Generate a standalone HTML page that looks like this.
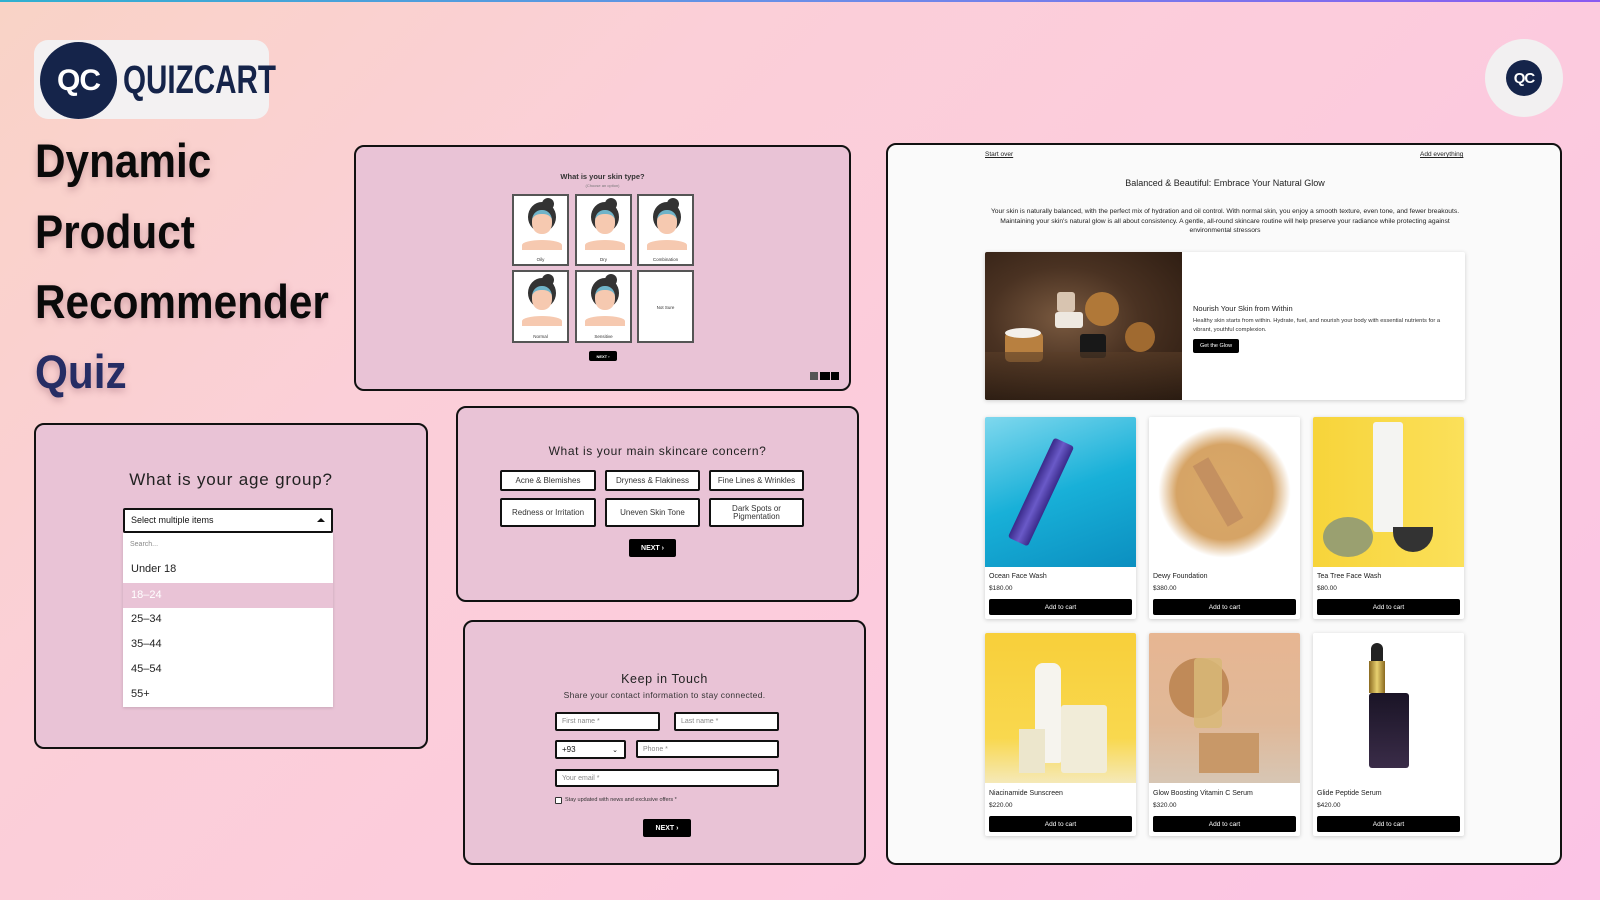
<!DOCTYPE html>
<html><head><meta charset="utf-8"><style>
*{box-sizing:border-box;margin:0;padding:0}
body{width:1600px;height:900px;overflow:hidden;position:relative;font-family:"Liberation Sans",sans-serif;
background:linear-gradient(135deg,#f9d3c6 0%,#fbcfd8 30%,#fccbdd 60%,#fcc4e6 100%);}
.topline{position:absolute;left:0;top:0;width:1600px;height:2px;background:linear-gradient(90deg,#30b0d0,#6a8ee8,#8a5af0)}
.abs{position:absolute}
.panel{position:absolute;background:#e9c3d6;border:2px solid #111;border-radius:10px}
.h{position:absolute;left:35px;font-weight:bold;font-size:47px;color:#0a0a0a;text-shadow:0 3px 8px rgba(120,60,80,.35);transform:scaleX(.9);transform-origin:left;white-space:nowrap}
.box{position:absolute;background:#fff;border:2px solid #111;border-radius:2px;font-size:8px;color:#333;display:flex;align-items:center;justify-content:center;text-align:center;line-height:8px}
.btn{position:absolute;background:#000;color:#fff;font-weight:bold;display:flex;align-items:center;justify-content:center;border-radius:2px}
.inp{position:absolute;background:#fff;border:2px solid #111;border-radius:2px;font-size:7px;color:#888;padding-left:5px;display:flex;align-items:center}
.card{position:absolute;background:#fff;box-shadow:0 1px 4px rgba(0,0,0,.18);border-radius:2px;overflow:hidden}
.card .img{height:150px}
.card .n{position:absolute;left:4px;font-size:7px;color:#222}
.card .p{position:absolute;left:4px;font-size:6.5px;color:#222}
.card .b{position:absolute;left:4px;right:4px;height:16px;background:#000;color:#fff;font-size:6.5px;border-radius:2px;display:flex;align-items:center;justify-content:center}
.face{position:absolute;background:#fff;border:2px solid #555;}
.face span{position:absolute;bottom:2px;left:0;right:0;text-align:center;font-size:4.5px;color:#333}
</style></head><body>
<div class="topline"></div>

<div class="abs" style="left:34px;top:40px;width:235px;height:79px;background:#f3f1f2;border-radius:14px"></div>
<div class="abs" style="left:40px;top:42px;width:77px;height:77px;border-radius:50%;background:#15244a;color:#fff;font-weight:bold;font-size:30px;display:flex;align-items:center;justify-content:center;letter-spacing:-1px">QC</div>
<div class="abs" style="left:123px;top:59px;font-family:'Liberation Sans Narrow','Liberation Sans',sans-serif;font-weight:bold;font-size:40px;color:#15244a;transform:scaleX(.74);transform-origin:left;line-height:42px">QUIZCART</div>

<div class="h" style="top:133px">Dynamic</div>
<div class="h" style="top:204px">Product</div>
<div class="h" style="top:274px">Recommender</div>
<div class="h" style="top:344px;color:#262d64">Quiz</div>

<div class="abs" style="left:1485px;top:39px;width:78px;height:78px;border-radius:50%;background:#f2f0f1"></div>
<div class="abs" style="left:1506px;top:60px;width:36px;height:36px;border-radius:50%;background:#15244a;color:#fff;font-weight:bold;font-size:15px;display:flex;align-items:center;justify-content:center;letter-spacing:-1px">QC</div>

<div class="panel" style="left:354px;top:145px;width:497px;height:246px"></div>
<div class="abs" style="left:354px;width:497px;top:172px;text-align:center;font-size:7.5px;font-weight:bold;color:#333">What is your skin type?</div>
<div class="abs" style="left:354px;width:497px;top:183px;text-align:center;font-size:4px;color:#777">(Choose an option)</div>
<div id="faces"></div>
<div class="btn" style="left:589px;top:351px;width:28px;height:10px;font-size:4px">NEXT ›</div>
<div class="abs" style="left:810px;top:372px;width:8px;height:8px;background:#555"></div>
<div class="abs" style="left:820px;top:372px;width:10px;height:8px;background:#000"></div>
<div class="abs" style="left:831px;top:372px;width:8px;height:8px;background:#000"></div>

<div class="panel" style="left:34px;top:423px;width:394px;height:326px"></div>
<div class="abs" style="left:34px;width:394px;top:470px;text-align:center;font-size:17px;color:#222;letter-spacing:.8px">What is your age group?</div>
<div class="abs" style="left:123px;top:508px;width:210px;height:25px;background:#fff;border:2px solid #111;border-radius:2px;font-size:9px;color:#111;padding-left:6px;line-height:21px">Select multiple items<span style="position:absolute;right:6px;top:8px;border-left:4px solid transparent;border-right:4px solid transparent;border-bottom:4px solid #111"></span></div>
<div class="abs" style="left:123px;top:533px;width:210px;height:174px;background:#fff;box-shadow:0 1px 3px rgba(0,0,0,.15);font-size:11px;color:#222">
<div style="position:absolute;left:7px;top:8px;font-size:7px;color:#888">Search...</div>
<div style="position:absolute;left:8px;top:30px">Under 18</div>
<div style="position:absolute;left:0;right:0;top:50px;height:25px;background:#e9c3d6;color:#fff;padding-left:8px;line-height:25px">18–24</div>
<div style="position:absolute;left:8px;top:80px">25–34</div>
<div style="position:absolute;left:8px;top:105px">35–44</div>
<div style="position:absolute;left:8px;top:130px">45–54</div>
<div style="position:absolute;left:8px;top:155px">55+</div>
</div>

<div class="panel" style="left:456px;top:406px;width:403px;height:196px"></div>
<div class="abs" style="left:456px;width:403px;top:444px;text-align:center;font-size:12px;color:#222;letter-spacing:.6px">What is your main skincare concern?</div>
<div class="box" style="left:500px;top:470px;width:96px;height:21px">Acne &amp; Blemishes</div>
<div class="box" style="left:605px;top:470px;width:95px;height:21px">Dryness &amp; Flakiness</div>
<div class="box" style="left:709px;top:470px;width:95px;height:21px">Fine Lines &amp; Wrinkles</div>
<div class="box" style="left:500px;top:498px;width:96px;height:29px">Redness or Irritation</div>
<div class="box" style="left:605px;top:498px;width:95px;height:29px">Uneven Skin Tone</div>
<div class="box" style="left:709px;top:498px;width:95px;height:29px">Dark Spots or<br>Pigmentation</div>
<div class="btn" style="left:629px;top:539px;width:47px;height:18px;font-size:7px">NEXT ›</div>

<div class="panel" style="left:463px;top:620px;width:403px;height:245px"></div>
<div class="abs" style="left:463px;width:403px;top:672px;text-align:center;font-size:12.5px;color:#222;letter-spacing:.6px">Keep in Touch</div>
<div class="abs" style="left:463px;width:403px;top:690px;text-align:center;font-size:8.5px;color:#333;letter-spacing:.3px">Share your contact information to stay connected.</div>
<div class="inp" style="left:555px;top:712px;width:105px;height:19px">First name *</div>
<div class="inp" style="left:674px;top:712px;width:105px;height:19px">Last name *</div>
<div class="inp" style="left:555px;top:740px;width:71px;height:19px;color:#111;font-size:8px">+93<span style="position:absolute;right:6px;font-size:7px">⌄</span></div>
<div class="inp" style="left:636px;top:740px;width:143px;height:18px">Phone *</div>
<div class="inp" style="left:555px;top:769px;width:224px;height:18px">Your email *</div>
<div class="abs" style="left:555px;top:797px;width:7px;height:7px;border:1px solid #333;background:#fff;border-radius:1px"></div>
<div class="abs" style="left:565px;top:797px;font-size:5.5px;color:#333">Stay updated with news and exclusive offers *</div>
<div class="btn" style="left:643px;top:819px;width:48px;height:18px;font-size:7px">NEXT ›</div>

<div class="abs" style="left:886px;top:143px;width:676px;height:722px;background:#fafafa;border:2px solid #111;border-radius:10px"></div>
<div class="abs" style="left:985px;top:151px;font-size:6.5px;text-decoration:underline;color:#222">Start over</div>
<div class="abs" style="left:1420px;top:151px;font-size:6.5px;text-decoration:underline;color:#222">Add everything</div>
<div class="abs" style="left:985px;width:480px;top:178px;text-align:center;font-size:9px;color:#222">Balanced &amp; Beautiful: Embrace Your Natural Glow</div>
<div class="abs" style="left:985px;width:480px;top:207px;text-align:center;font-size:6.7px;line-height:9.5px;color:#222">Your skin is naturally balanced, with the perfect mix of hydration and oil control. With normal skin, you enjoy a smooth texture, even tone, and fewer breakouts. Maintaining your skin's natural glow is all about consistency. A gentle, all-round skincare routine will help preserve your radiance while protecting against environmental stressors</div>

<div class="card" style="left:985px;top:252px;width:480px;height:148px">
<div style="position:absolute;left:0;top:0;width:197px;height:148px;background:radial-gradient(ellipse at 40% 45%,#7a5a40 0%,#4a3222 45%,#2a1a10 100%)">
 <div style="position:absolute;left:72px;top:40px;width:18px;height:20px;background:#d8c4b0;border-radius:3px"></div>
 <div style="position:absolute;left:70px;top:60px;width:28px;height:16px;background:#eee8e0;border-radius:3px"></div>
 <div style="position:absolute;left:100px;top:40px;width:34px;height:34px;background:#b07838;border-radius:50%"></div>
 <div style="position:absolute;left:140px;top:70px;width:30px;height:30px;background:#a06a30;border-radius:50%"></div>
 <div style="position:absolute;left:20px;top:80px;width:38px;height:30px;background:#b88040;border-radius:5px"></div>
 <div style="position:absolute;left:20px;top:76px;width:36px;height:10px;background:#f4f0ea;border-radius:50%"></div>
 <div style="position:absolute;left:95px;top:82px;width:26px;height:24px;background:#181818;border-radius:3px"></div>
 <div style="position:absolute;left:0;top:100px;width:197px;height:48px;background:linear-gradient(#5a3e28,#2a1c12);opacity:.6"></div>
</div>
<div style="position:absolute;left:208px;top:52px;font-size:7.5px;color:#222">Nourish Your Skin from Within</div>
<div style="position:absolute;left:208px;top:65px;width:260px;font-size:5.8px;line-height:9px;color:#333">Healthy skin starts from within. Hydrate, fuel, and nourish your body with essential nutrients for a vibrant, youthful complexion.</div>
<div style="position:absolute;left:208px;top:87px;width:46px;height:14px;background:#000;color:#fff;font-size:5.5px;border-radius:2px;display:flex;align-items:center;justify-content:center">Get the Glow</div>
</div>

<div id="cards"></div>

<script>
var f=[["Oily",512,194],["Dry",575,194],["Combination",637,194],["Normal",512,270],["Sensitive",575,270],["Not Sure",637,270]];
var h="";
f.forEach(function(a,i){var ht=a[2]==194?72:73;
h+='<div class="face" style="left:'+a[1]+'px;top:'+a[2]+'px;width:57px;height:'+ht+'px">';
if(i<5){h+='<div style="position:absolute;left:14px;top:6px;width:28px;height:30px;border-radius:50%;background:#333"></div><div style="position:absolute;left:28px;top:2px;width:12px;height:12px;border-radius:50%;background:#333"></div><div style="position:absolute;left:18px;top:14px;width:20px;height:24px;border-radius:45%;background:#f6c9b0;border-top:4px solid #6fb3c8"></div><div style="position:absolute;left:8px;top:44px;width:40px;height:10px;border-radius:50% 50% 0 0;background:#f6c9b0"></div>';h+='<span>'+a[0]+'</span>';}
else h+='<span style="bottom:auto;top:33px">'+a[0]+'</span>';
h+='</div>';});
document.getElementById('faces').innerHTML=h;
var c=[["Ocean Face Wash","$180.00",985,417,"linear-gradient(160deg,#7fd8ee,#18b0d8 50%,#0b8fc0)"],
["Dewy Foundation","$380.00",1149,417,"radial-gradient(ellipse at 50% 50%,#d9a868 0%,#d6a466 45%,#fff 62%)"],
["Tea Tree Face Wash","$80.00",1313,417,"linear-gradient(90deg,#f7d43a,#fbe05a)"],
["Niacinamide Sunscreen","$220.00",985,633,"linear-gradient(180deg,#f8cf3a,#f9d84e 70%,#f5e9b8)"],
["Glow Boosting Vitamin C Serum","$320.00",1149,633,"linear-gradient(180deg,#e7b692,#e0b898 60%,#d7c6b4)"],
["Glide Peptide Serum","$420.00",1313,633,"#fff"]];
var o="";
c.forEach(function(a,i){o+='<div class="card" style="left:'+a[2]+'px;top:'+a[3]+'px;width:151px;height:'+(i<3?202:203)+'px"><div class="img" style="background:'+a[4]+';position:relative">';
if(i==0)o+='<div style="position:absolute;left:45px;top:20px;width:22px;height:110px;background:linear-gradient(90deg,#3a2a8a,#6a5ac8,#3a2a8a);transform:rotate(25deg);border-radius:3px"></div>';
if(i==1)o+='<div style="position:absolute;left:60px;top:40px;width:18px;height:70px;background:#c49060;transform:rotate(-30deg)"></div>';
if(i==2)o+='<div style="position:absolute;left:60px;top:5px;width:30px;height:110px;background:#f4f4f2;border-radius:3px"></div><div style="position:absolute;left:80px;top:110px;width:40px;height:25px;background:#333;border-radius:0 0 20px 20px"></div><div style="position:absolute;left:10px;top:100px;width:50px;height:40px;background:#9aa070;border-radius:50%"></div>';
if(i==3)o+='<div style="position:absolute;left:50px;top:30px;width:26px;height:100px;background:#f6f4ee;border-radius:8px 8px 2px 2px"></div><div style="position:absolute;left:76px;top:72px;width:46px;height:68px;background:#f1ecd8;border-radius:3px"></div><div style="position:absolute;left:34px;top:96px;width:26px;height:44px;background:#ece6cc"></div>';
if(i==4)o+='<div style="position:absolute;left:20px;top:25px;width:60px;height:60px;border-radius:50%;background:#c08a58"></div><div style="position:absolute;left:45px;top:25px;width:28px;height:70px;background:#d8b878;opacity:.85;border-radius:4px"></div><div style="position:absolute;left:50px;top:100px;width:60px;height:40px;background:#c89868"></div>';
if(i==5)o+='<div style="position:absolute;left:58px;top:10px;width:12px;height:20px;background:#222;border-radius:6px 6px 0 0"></div><div style="position:absolute;left:56px;top:28px;width:16px;height:32px;background:linear-gradient(90deg,#8a6a20,#e8d070,#8a6a20)"></div><div style="position:absolute;left:56px;top:60px;width:40px;height:75px;background:linear-gradient(#1a1426,#3a2c48);border-radius:3px"></div>';
o+='</div><div class="n" style="top:'+(i<3?156:157)+'px">'+a[0]+'</div><div class="p" style="top:'+(i<3?168:169)+'px">'+a[1]+'</div><div class="b" style="top:'+(i<3?182:183)+'px">Add to cart</div></div>';});
document.getElementById('cards').innerHTML=o;
</script>
</body></html>
